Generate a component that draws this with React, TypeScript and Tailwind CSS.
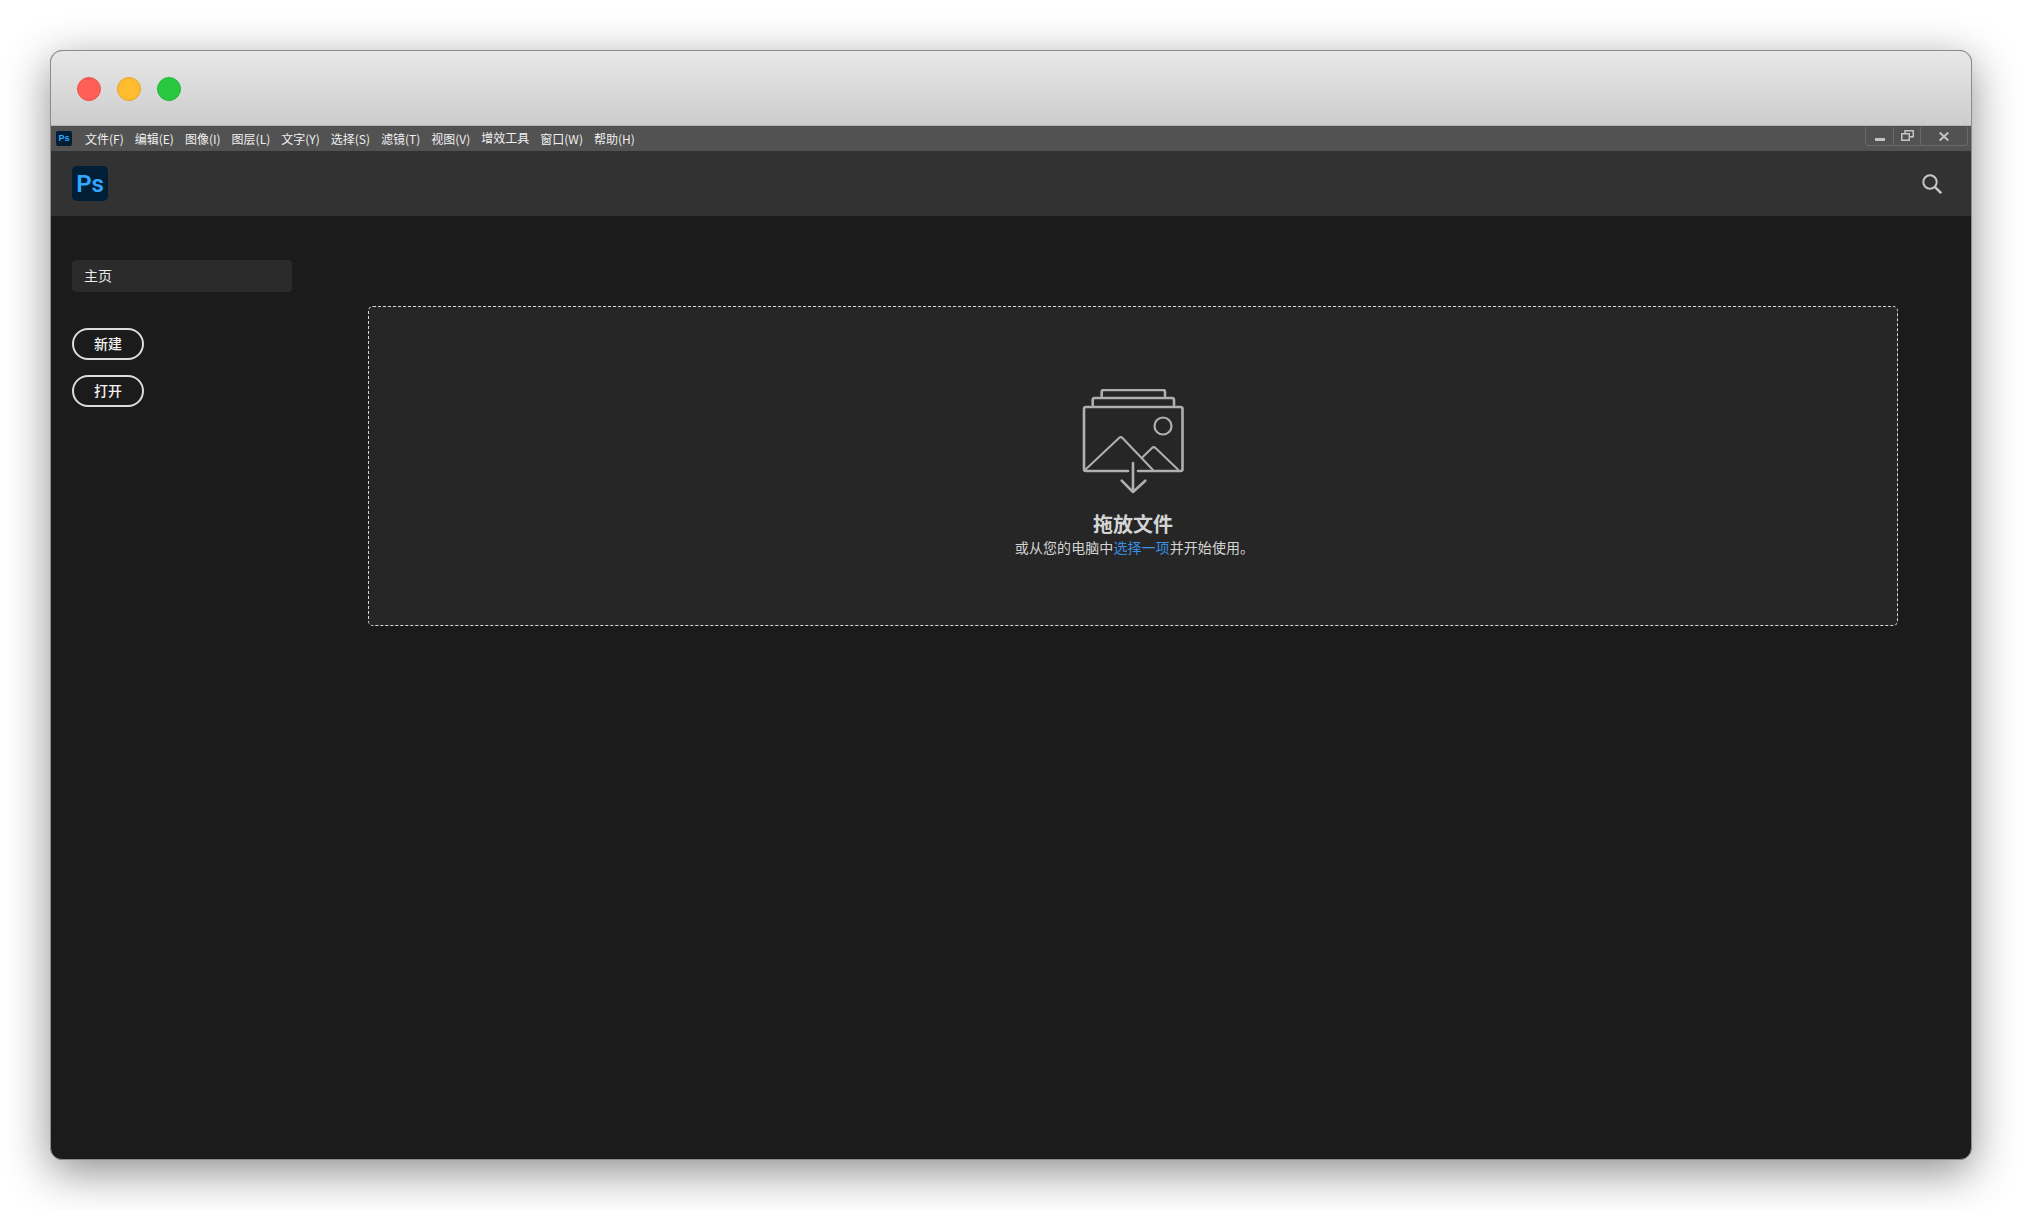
const menus = ["文件(F)", "编辑(E)", "图像(I)", "图层(L)", "文字(Y)", "选择(S)", "滤镜(T)", "视图(V)", "增效工具", "窗口(W)", "帮助(H)"];

const cjk = "font-['Noto_Sans_CJK_SC','Noto_Sans',sans-serif]";

function DropIcon() {
  return (
    <svg width="106" height="106" viewBox="0 0 106 106" fill="none" stroke="#b0b0b0" strokeWidth="2.600" strokeLinejoin="round" strokeLinecap="round">
      <path d="M21.700 7V3a2 2 0 0 1 2-2h59.300a2 2 0 0 1 2 2v4" />
      <path d="M12.700 16v-5a2 2 0 0 1 2-2H92a2 2 0 0 1 2 2v5" />
      <path d="M48 82H6a2 2 0 0 1-2-2V20a2 2 0 0 1 2-2h94.500a2 2 0 0 1 2 2v60a2 2 0 0 1-2 2H58" />
      <circle cx="83" cy="37" r="8.500" strokeWidth="2.200" />
      <path d="M5 81 39 49a2.500 2.500 0 0 1 3.500 0L73 81" strokeWidth="2" />
      <path d="M62.700 68 72 59a2.500 2.500 0 0 1 3.500 0L98 80.500" strokeWidth="2" />
      <path d="M53 74v29M41.700 91.700 53 103l12.300-11.300" />
    </svg>
  );
}

export default function App() {
  return (
    <div className={`w-[2022px] h-[1210px] bg-white pl-[50px] pt-[50px] overflow-hidden ${cjk}`}>
      <div className="w-[1922px] h-[1110px] rounded-[12px] overflow-hidden flex flex-col bg-[#1b1b1b] border border-[#8c8c8c] shadow-[0_12px_45px_rgba(0,0,0,0.45)]">
        <div className="h-[75px] shrink-0 flex items-center gap-4 pl-[26px] pt-[2px] bg-gradient-to-b from-[#e8e8e8] to-[#cdcdcd] border-b border-[#b5b5b5]">
          <div className="w-6 h-6 rounded-full bg-[#ff5f57] border border-[#e8564f]" />
          <div className="w-6 h-6 rounded-full bg-[#febc2e] border border-[#e3a52c]" />
          <div className="w-6 h-6 rounded-full bg-[#28c840] border border-[#25b53b]" />
        </div>

        <div className="h-[25px] shrink-0 flex items-center bg-[#525252] pl-[5px] pr-[3px] relative">
          <div className="w-4 h-[15px] rounded-[2px] bg-[#001e36] text-[#31a8ff] text-[9px] font-bold flex items-center justify-center font-['Liberation_Sans',sans-serif] mr-[13px]">Ps</div>
          <div className="flex items-center gap-[11px] text-[12px] leading-4 text-[#f0f0f0]">
            {menus.map((m) => (
              <span key={m} className={m === "增效工具" ? "-mt-[2px]" : ""}>{m}</span>
            ))}
          </div>
          <div className="ml-auto h-[19px] -mt-[5px] flex border-x border-b border-[#696969] rounded-b-[3px]">
            <div className="w-[28px] border-r border-[#696969] flex items-end justify-center pb-[4px]">
              <div className="w-[10px] h-[3px] bg-[#c4c4c4]" />
            </div>
            <div className="w-[27px] border-r border-[#696969] flex items-center justify-center">
              <svg width="13" height="11" viewBox="0 0 13 11" fill="none" stroke="#c4c4c4" strokeWidth="1.500">
                <rect x="0.750" y="3.750" width="7.500" height="6.500" />
                <path d="M4 3.500V.75h8.250v6H8.500" />
              </svg>
            </div>
            <div className="w-[46px] flex items-start justify-center pt-[5px]">
              <svg width="10" height="9" viewBox="0 0 10 9" fill="none" stroke="#c4c4c4" strokeWidth="2">
                <path d="M.7.5l8.600 8M9.300.5L.7 8.500" />
              </svg>
            </div>
          </div>
        </div>

        <div className="h-[65px] shrink-0 flex items-center justify-between bg-[#323232] pl-[21px] pr-[29px]">
          <div className="w-9 h-[35px] rounded-[5px] bg-[#001e36] text-[#31a8ff] text-[24px] font-semibold flex items-center justify-center font-['Roboto',sans-serif]">Ps</div>
          <svg width="20" height="20" viewBox="0 0 20 20" fill="none" stroke="#c8c8c8" strokeWidth="2">
            <circle cx="8" cy="8" r="6.700" />
            <path d="M12.800 12.800 19.200 19.200" strokeWidth="2.400" />
          </svg>
        </div>

        <div className="flex-1 flex">
          <div className="w-[317px] shrink-0 pl-[21px] pt-[44px]">
            <div className="w-[220px] h-[32px] rounded-[4px] bg-[#2b2b2b] text-[#ececec] text-[14px] flex items-center pl-[12px] pb-[2px]">主页</div>
            <div className="mt-[36px] flex flex-col gap-[15px]">
              <button className="w-[72px] h-[32px] rounded-full border-2 border-[#dcdcdc] text-[#f2f2f2] text-[14px] font-medium flex items-center justify-center pb-[2px]">新建</button>
              <button className="w-[72px] h-[32px] rounded-full border-2 border-[#dcdcdc] text-[#f2f2f2] text-[14px] font-medium flex items-center justify-center pb-[2px]">打开</button>
            </div>
          </div>
          <div className="pt-[90px]">
            <div className="w-[1530px] h-[320px] bg-[#262626] rounded-[5px] border border-dashed border-[#d8d8d8] flex flex-col items-center pt-[82px]">
              <DropIcon />
              <div className="mt-[16px] text-[20px] leading-[26px] font-bold text-[#d4d4d4]">拖放文件</div>
              <div className="ml-[3px] text-[14px] leading-[20px] tracking-[0.08px] text-[#d4d4d4]">
                或从您的电脑中<span className="text-[#3a8fe0]">选择一项</span>并开始使用。
              </div>
            </div>
          </div>
        </div>
      </div>
    </div>
  );
}
